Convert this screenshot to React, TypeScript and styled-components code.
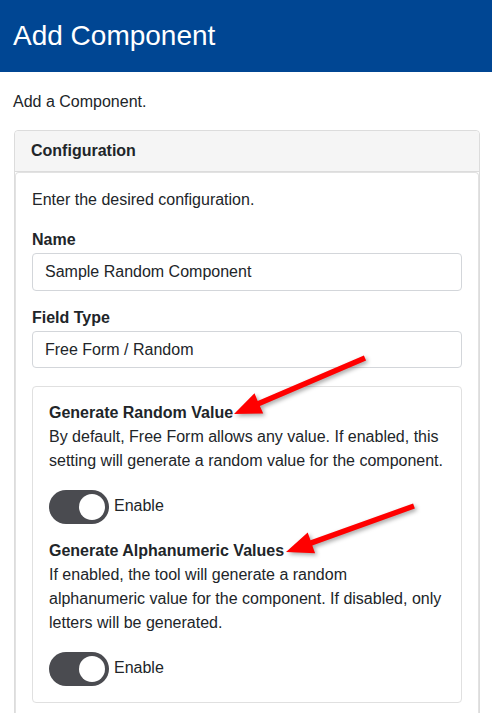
import styled, { createGlobalStyle } from "styled-components"

const GlobalStyle = createGlobalStyle`
	html, body {
		margin: 0;
		padding: 0;
		background: #ffffff;
		font-family: "Liberation Sans", Arial, sans-serif;
		color: #212529;
	}
	* {
		box-sizing: border-box;
	}
`

type Pt = [number, number]

// arrow polygon from tail to tip
const arrowPoints = (tail: Pt, tip: Pt, shaft: number, headLen: number, headW: number) => {
	const dx = tip[0] - tail[0]
	const dy = tip[1] - tail[1]
	const len = Math.sqrt(dx * dx + dy * dy)
	const ux = dx / len
	const uy = dy / len
	const nx = -uy
	const ny = ux
	const bx = tip[0] - ux * headLen
	const by = tip[1] - uy * headLen
	const pts: Pt[] = [
		[tail[0] + (nx * shaft) / 2, tail[1] + (ny * shaft) / 2],
		[bx + (nx * shaft) / 2, by + (ny * shaft) / 2],
		[bx + (nx * headW) / 2, by + (ny * headW) / 2],
		tip,
		[bx - (nx * headW) / 2, by - (ny * headW) / 2],
		[bx - (nx * shaft) / 2, by - (ny * shaft) / 2],
		[tail[0] - (nx * shaft) / 2, tail[1] - (ny * shaft) / 2],
	]
	return pts.map((p) => p[0].toFixed(1) + "," + p[1].toFixed(1)).join(" ")
}

const settings = [
	{
		title: "Generate Random Value",
		text: "By default, Free Form allows any value. If enabled, this setting will generate a random value for the component.",
	},
	{
		title: "Generate Alphanumeric Values",
		text: "If enabled, the tool will generate a random alphanumeric value for the component. If disabled, only letters will be generated.",
	},
]

export default function App() {
	return (
		<>
			<GlobalStyle />
			<Page>
				<TopBar>
					<Title>Add Component</Title>
				</TopBar>
				<Main>
					<Intro>Add a Component.</Intro>
					<Card>
						<CardHeader>Configuration</CardHeader>
						<CardBody>
							<Lead>Enter the desired configuration.</Lead>
							<Label>Name</Label>
							<Input defaultValue="Sample Random Component" />
							<Label>Field Type</Label>
							<Select>Free Form / Random</Select>
							<Options>
								{settings.map((s, i) => (
									<Setting key={i} $first={i === 0}>
										<SettingTitle>{s.title}</SettingTitle>
										<SettingText>{s.text}</SettingText>
										<ToggleRow>
											<Toggle role="switch" aria-checked="true">
												<Knob />
											</Toggle>
											<ToggleLabel>Enable</ToggleLabel>
										</ToggleRow>
									</Setting>
								))}
							</Options>
						</CardBody>
					</Card>
				</Main>
				<Annotations width="492" height="713" viewBox="0 0 492 713">
					<polygon points={arrowPoints([365, 358], [234, 414], 5.5, 27, 22)} fill="#ff0000" />
					<polygon points={arrowPoints([414, 506], [286, 552], 5.5, 27, 22)} fill="#ff0000" />
				</Annotations>
			</Page>
		</>
	)
}

//style

const Page = styled.div`
	position: relative;
	width: 492px;
	height: 713px;
	overflow: hidden;
`

const TopBar = styled.header`
	height: 72px;
	background: #004693;
	display: flex;
	align-items: center;
	padding: 0 13px;
`

const Title = styled.h1`
	margin: 0;
	font-size: 28px;
	font-weight: 400;
	color: #ffffff;
	line-height: 1;
	padding-bottom: 1px;
`

const Main = styled.main`
	padding: 18px 12px 0 14px;
`

const Intro = styled.p`
	margin: 0 0 16px -1px;
	font-size: 16px;
	line-height: 24px;
`

const Card = styled.section`
	width: 466px;
	border: 1px solid #dcdcdc;
	border-radius: 4px;
	background: #ffffff;
`

const CardHeader = styled.div`
	height: 41px;
	padding: 0 16px;
	display: flex;
	align-items: center;
	background: #f5f5f5;
	border-bottom: 1px solid #dcdcdc;
	font-size: 16px;
	font-weight: 700;
	border-radius: 4px 4px 0 0;
`

const CardBody = styled.div`
	border: 1px solid #e2e2e2;
	border-bottom: none;
	border-radius: 4px 4px 0 0;
	padding: 15px 16px 16px;
	display: flex;
	flex-direction: column;
`

const Lead = styled.p`
	margin: 0 0 16px;
	font-size: 16px;
	line-height: 24px;
`

const Label = styled.label`
	display: block;
	font-size: 16px;
	font-weight: 700;
	line-height: 24px;
	margin-bottom: 1px;
`

const Input = styled.input`
	width: 430px;
	height: 38px;
	margin: 0 0 15px;
	padding: 0 12px;
	border: 1px solid #d3d6da;
	border-radius: 4px;
	font-family: inherit;
	font-size: 16px;
	color: #212529;
	outline: none;
`

const Select = styled.div`
	width: 430px;
	height: 37px;
	padding: 0 12px;
	display: flex;
	align-items: center;
	border: 1px solid #d3d6da;
	border-radius: 4px;
	font-size: 16px;
	margin-bottom: 18px;
`

const Options = styled.div`
	border: 1px solid #e0e0e0;
	border-radius: 4px;
	padding: 14px 16px 16px;
`

const Setting = styled.div<{ $first: boolean }>`
	margin-top: ${(p) => (p.$first ? "0" : "15px")};
`

const SettingTitle = styled.div`
	font-size: 16px;
	font-weight: 700;
	line-height: 24px;
`

const SettingText = styled.p`
	margin: 0;
	font-size: 16px;
	line-height: 24px;
`

const ToggleRow = styled.div`
	margin-top: 17px;
	display: flex;
	align-items: center;
	gap: 5px;
	height: 34px;
`

const ToggleLabel = styled.span`
	font-size: 16px;
	margin-top: -3px;
`

const Toggle = styled.div`
	width: 60px;
	height: 34px;
	border-radius: 17px;
	background: #4a4b50;
	display: flex;
	align-items: center;
	justify-content: flex-end;
	padding-right: 4px;
`

const Knob = styled.div`
	width: 26px;
	height: 26px;
	border-radius: 50%;
	background: #ffffff;
`

const Annotations = styled.svg`
	position: absolute;
	left: 0;
	top: 0;
	pointer-events: none;
	filter: drop-shadow(2px 2px 2px rgba(0, 0, 0, 0.35));
`
